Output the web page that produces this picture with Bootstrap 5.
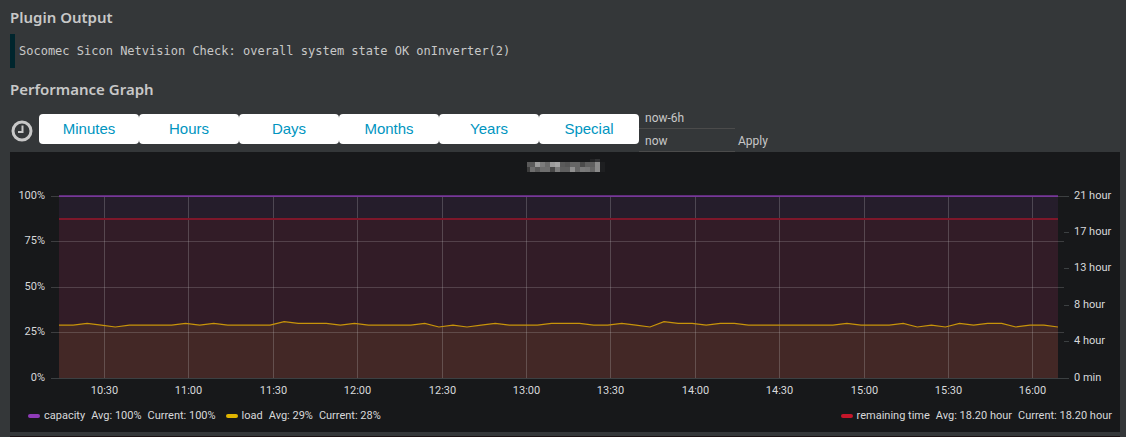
<!DOCTYPE html>
<html lang="en">
<head>
<meta charset="utf-8">
<meta name="viewport" content="width=device-width, initial-scale=1">
<title>Service details</title>
<link href="https://cdn.jsdelivr.net/npm/bootstrap@5.3.0/dist/css/bootstrap.min.css" rel="stylesheet">
<style>
body { background: #343739; color: #c8c8c8; font-family: Roboto, sans-serif; font-size: 12px; overflow-x: hidden; }
.page { padding: 7px 6px 0 10px; }
.section-title { font: 600 15px/20px "Noto Sans", sans-serif; margin: 0; }
.plugin-output { border-left: 5px solid #00252d; padding: 8px 4px; margin: 7px 0 11px; font: 12px/18px "DejaVu Sans Mono", monospace; white-space: pre-wrap; }
.time-bar { height: 46px; margin-top: 7px; }
.clock { width: 22px; height: 22px; margin: 3px 6px 0 1px; }
.range-btn { width: 100px; height: 30px; padding: 0; border: 0; border-radius: 4px; background: #fff; color: #0095bf; font: 15px/30px "Liberation Sans", sans-serif; }
.range-btn:hover { background: #eee; color: #0095bf; }
.range-input { width: 96px; height: 23px; padding: 2px 6px 0; border: 0; border-bottom: 1px solid #4b4b4b; background: transparent; color: #c8c8c8; font-size: 12px; border-radius: 0; display: block; }
.apply-btn { height: 23px; padding: 1px 3px 0; border: 0; color: #c8c8c8; font-size: 12px; line-height: 23px; }
.graph { background: #17181a; height: auto; }
.graph svg { display: block; width: 100%; height: auto; }
.graph text { fill: #d8d9da; font-size: 11px; }
.legend { padding: 5px 8px 8px 18px; font-size: 11px; line-height: 17px; color: #d8d9da; }
.legend-item { display: flex; align-items: center; gap: 6px; }
.swatch { width: 12px; height: 4px; border-radius: 2px; margin-right: -2px; }
.purple { background: #8f3bb8; } .gold { background: #e0b400; } .crimson { background: #c4162a; }
.series-left { column-gap: 10px; }
.next-panel { background: #1a1113; height: 1px; margin-top: 4px; }
</style>
</head>
<body>
<main class="page">
  <h2 class="section-title">Plugin Output</h2>
  <div class="plugin-output">Socomec Sicon Netvision Check: overall system state OK onInverter(2)</div>
  <h2 class="section-title">Performance Graph</h2>
  <div class="time-bar d-flex align-items-center">
    <svg class="clock flex-shrink-0" viewBox="0 0 22 22" fill="none" stroke="#c8c8c8" aria-hidden="true"><circle cx="11" cy="11" r="9" stroke-width="3"/><path d="M11.5 5.5v6.5H7" stroke-width="2"/></svg>
    <div class="d-flex">
      <button type="button" class="btn range-btn">Minutes</button>
      <button type="button" class="btn range-btn">Hours</button>
      <button type="button" class="btn range-btn">Days</button>
      <button type="button" class="btn range-btn">Months</button>
      <button type="button" class="btn range-btn">Years</button>
      <button type="button" class="btn range-btn">Special</button>
    </div>
    <form class="d-flex align-items-end">
      <div>
        <input class="range-input" aria-label="From" value="now-6h">
        <input class="range-input" aria-label="To" value="now">
      </div>
      <button type="button" class="btn apply-btn">Apply</button>
    </form>
  </div>
  <section class="graph">
    <svg id="chart" viewBox="10 152 1110 250" role="img" aria-label="capacity, load and remaining time"></svg>
    <div class="legend d-flex flex-wrap justify-content-between">
      <div class="series-left d-flex flex-wrap">
        <div class="legend-item"><span class="swatch purple"></span><span>capacity</span><span>Avg: 100%</span><span>Current: 100%</span></div>
        <div class="legend-item"><span class="swatch gold"></span><span>load</span><span>Avg: 29%</span><span>Current: 28%</span></div>
      </div>
      <div class="legend-item"><span class="swatch crimson"></span><span>remaining time</span><span>Avg: 18.20 hour</span><span>Current: 18.20 hour</span></div>
    </div>
  </section>
  <div class="next-panel"></div>
</main>
<script>
const L = 59, R = 1058, B = 378;
const load = [29,29,30,29,28,29,29,29,29,30,29,30,29,29,29,29,31,30,30,30,29,30,29,29,29,29,30,28,29,28,29,30,29,29,29,30,30,30,29,29,30,29,28,31,30,30,29,30,30,29,29,29,29,29,29,29,30,29,29,29,30,28,29,28,30,29,30,30,28,29,29,28];
const pts = load.map((v, i) => `${(L + i * (R - L) / (load.length - 1)).toFixed(1)},${(B - v * 1.82).toFixed(1)}`).join(' ');
let s = '';
const rect = (x, y, w, h, f) => s += `<rect x="${x}" y="${y}" width="${w}" height="${h}" fill="${f}"/>`;
const text = (x, y, a, t) => s += `<text x="${x}" y="${y}" text-anchor="${a}">${t}</text>`;

// masked title
[['5a','5a','9b','7c','6b','9b','a5','5a','55','66','66','4b','5f','5f','8a'],
 ['3c','6e','5a','6e','6e','48','7c','5f','5f','90','66','7a','77','66','8a']]
 .forEach((row, r) => row.forEach((c, i) => rect(i ? 525 + i * 5 : 527, 162 + r * 5, i ? 5 : 3, 5, '#' + c + c + c)));
rect(590, 159, 5, 3, '#222325'); rect(595, 159, 5, 3, '#303133'); rect(600, 162, 5, 10, '#1e1f21');

// series areas
rect(L, 196, R - L, 23, '#251d2b');
rect(L, 219, R - L, B - 219, '#321c27');
s += `<polygon points="${L},${B} ${pts} ${R},${B}" fill="#432826"/>`;

// grid and axes
[[196,'100%'],[241,'75%'],[287,'50%'],[332,'25%'],[378,'0%']].forEach(([y, t]) => {
  rect(51, y, 1013, 1, y === 378 ? '#3c4042' : 'rgba(200,200,200,.22)');
  text(45, y + 3, 'end', t);
});
['10:30','11:00','11:30','12:00','12:30','13:00','13:30','14:00','14:30','15:00','15:30','16:00'].forEach((t, i) => {
  const x = Math.round(104 + i * 84.4);
  rect(x, 196, 1, 182, 'rgba(200,200,200,.25)');
  text(x + 0.5, 394, 'middle', t);
});
[[196,'21 hour'],[232,'17 hour'],[268,'13 hour'],[305,'8 hour'],[341,'4 hour'],[378,'0 min']].forEach(([y, t]) => {
  rect(1064, y, 5, 1, '#3c4042');
  text(1074, y + 3, 'start', t);
});

// series lines
rect(L, 195, R - L, 1, '#5e2f78'); rect(L, 196, R - L, 1, '#77379a');
rect(L, 218, R - L, 2, '#7d172a');
s += `<polyline points="${pts}" fill="none" stroke="#c8940a" stroke-width="1.2"/>`;
document.getElementById('chart').innerHTML = s;
</script>
<script src="https://cdn.jsdelivr.net/npm/bootstrap@5.3.0/dist/js/bootstrap.bundle.min.js"></script>
</body>
</html>
